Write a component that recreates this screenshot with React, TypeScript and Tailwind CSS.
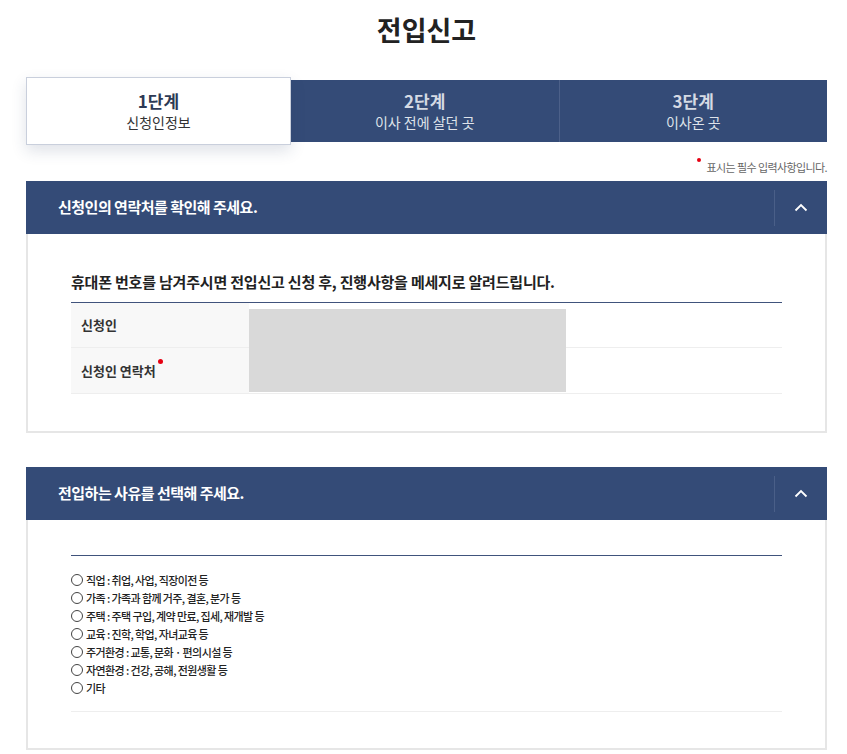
import React from 'react';

const font = { fontFamily: '"Noto Sans CJK KR", "Noto Sans", sans-serif' };

const reasons = [
  '직업 : 취업, 사업, 직장이전 등',
  '가족 : 가족과 함께 거주, 결혼, 분가 등',
  '주택 : 주택 구입, 계약 만료, 집세, 재개발 등',
  '교육 : 진학, 학업, 자녀교육 등',
  '주거환경 : 교통, 문화 · 편의시설 등',
  '자연환경 : 건강, 공해, 전원생활 등',
  '기타',
];

function SectionHeader({ title }: { title: string }) {
  return (
    <div className="flex h-[53px] items-center bg-[#344b77]">
      <h2 className="flex-1 pl-8 text-[15px] font-bold tracking-[-0.5px] text-white">{title}</h2>
      <div className="h-[36px] w-px bg-[#4a5f88]" />
      <button className="flex h-full w-[52px] items-center justify-center text-white">
        <svg width="14" height="9" viewBox="0 0 14 9" fill="none">
          <path d="M1.5 7.5L7 2l5.5 5.5" stroke="white" strokeWidth="1.8" />
        </svg>
      </button>
    </div>
  );
}

export default function App() {
  return (
    <div className="min-h-[754px] w-[847px] bg-white pl-[26px] pr-[20px] text-[#222]" style={font}>
      <h1 className="pt-[11px] text-center text-[27px] font-bold leading-[38px] text-[#222]">전입신고</h1>

      <div className="mt-[29px] flex h-[66px] items-center">
        <div className="z-10 flex h-[68px] w-[265px] flex-col items-center justify-center border border-[#c9cfdc] bg-white shadow-[0_6px_14px_rgba(40,60,100,0.15)]">
          <span className="text-[17px] font-bold leading-[22px] text-[#2d3a55]">1단계</span>
          <span className="text-[14px] leading-[20px] text-[#333]">신청인정보</span>
        </div>
        <div className="flex h-[62px] flex-1 items-center bg-[#344b77]">
          <div className="flex h-full flex-1 flex-col items-center justify-center">
            <span className="text-[17px] font-bold leading-[22px] text-[#d5dae4]">2단계</span>
            <span className="text-[14px] leading-[20px] text-[#dfe3ea]">이사 전에 살던 곳</span>
          </div>
          <div className="h-full w-px bg-[#4c6089]" />
          <div className="flex h-full flex-1 flex-col items-center justify-center">
            <span className="text-[17px] font-bold leading-[22px] text-[#d5dae4]">3단계</span>
            <span className="text-[14px] leading-[20px] text-[#dfe3ea]">이사온 곳</span>
          </div>
        </div>
      </div>

      <p className="mt-[15px] flex items-start justify-end text-[11px] leading-[16px] tracking-[-0.6px] text-[#666]">
        <span className="mr-[6px] mt-[-1px] h-[4px] w-[4px] rounded-full bg-[#e60012]" />
        <span>표시는 필수 입력사항입니다.</span>
      </p>

      <section className="mt-[6px]">
        <SectionHeader title="신청인의 연락처를 확인해 주세요." />
        <div className="border-x-2 border-b-2 border-[#e6e6e6] px-[43px] pb-[37px] pt-[38px]">
          <p className="pb-[10px] text-[15px] font-bold leading-[20px] tracking-[-0.2px] text-[#222]">
            휴대폰 번호를 남겨주시면 전입신고 신청 후, 진행사항을 메세지로 알려드립니다.
          </p>
          <div className="border-t-[1.5px] border-[#40537c]">
            <div className="flex">
              <div className="flex w-[178px] flex-col bg-[#f8f8f8]">
                <div className="flex h-[45px] items-center border-b border-[#eeeeee] pl-[10px] text-[13px] font-bold text-[#333]">
                  신청인
                </div>
                <div className="flex h-[46px] items-center border-b border-[#eeeeee] pl-[10px] text-[13px] font-bold text-[#333]">
                  <span className="relative">
                    신청인 연락처
                    <span className="absolute -right-[7px] top-[-2px] h-[5px] w-[5px] rounded-full bg-[#e60012]" />
                  </span>
                </div>
              </div>
              <div className="relative flex flex-1 flex-col">
                <div className="h-[45px] border-b border-[#eeeeee]" />
                <div className="h-[46px] border-b border-[#eeeeee]" />
                <div className="absolute left-0 top-[6px] h-[83px] w-[317px] bg-[#d9d9d9]" />
              </div>
            </div>
          </div>
        </div>
      </section>

      <section className="mt-[34px]">
        <SectionHeader title="전입하는 사유를 선택해 주세요." />
        <div className="border-x-2 border-b-2 border-[#e6e6e6] px-[43px] pb-[36px] pt-[35px]">
          <div className="border-t-[1.5px] border-[#40537c] pt-[15px]">
            <ul className="flex flex-col">
              {reasons.map((r) => (
                <li key={r} className="flex h-[18px] items-center gap-[3px] text-[11px] font-medium tracking-[-0.6px] text-[#222]">
                  <span className="inline-block h-[12px] w-[12px] rounded-full border border-[#444]" />
                  {r}
                </li>
              ))}
            </ul>
            <div className="mt-[14px] border-t border-[#eeeeee]" />
          </div>
        </div>
      </section>
    </div>
  );
}
